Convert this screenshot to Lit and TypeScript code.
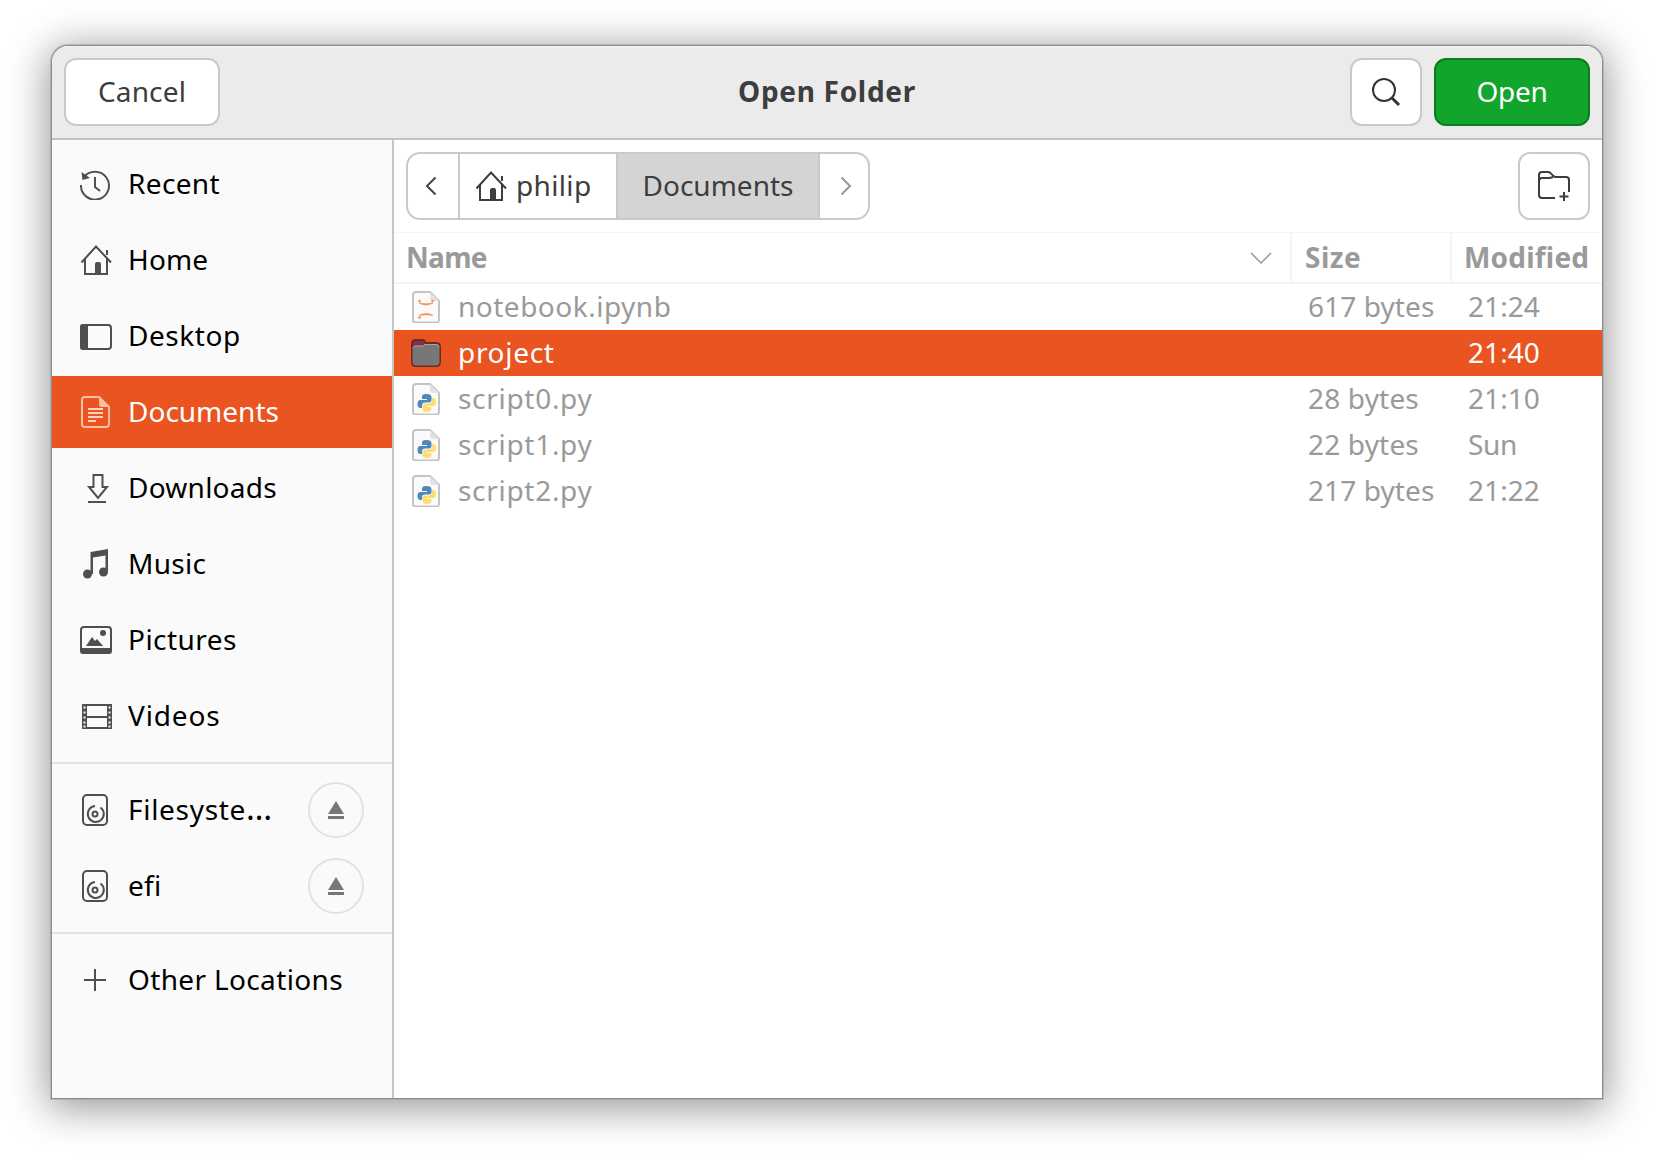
import { LitElement, html, css, svg } from "lit";
import { customElement } from "lit/decorators.js";

const I = {
  recent: svg`<path d="M3.600 9.500A14 14 0 1 1 1 17" fill="none" stroke="currentColor" stroke-width="2"/><path d="M1.500 4l1 8 7.500-2z" fill="currentColor"/><path d="M15 9v10l5 4" fill="none" stroke="currentColor" stroke-width="2"/>`,
  home: svg`<path d="M1.500 18.500L16 2.500l15 16" fill="none" stroke="currentColor" stroke-width="2"/><path d="M5 15v15h22V15" fill="none" stroke="currentColor" stroke-width="2"/><path d="M15 30V20q0-2 2-2h2q2 0 2 2v10zM26 6h2v5h-2z" fill="currentColor"/>`,
  desktop: svg`<rect x="1" y="5" width="30" height="24" rx="3" fill="none" stroke="currentColor" stroke-width="2"/><path d="M3 4h5v26H3a3 3 0 0 1-3-3V7a3 3 0 0 1 3-3z" fill="currentColor"/>`,
  doc: svg`<path d="M5 1h14l10 10v17a3 3 0 0 1-3 3H5a3 3 0 0 1-3-3V4a3 3 0 0 1 3-3z" fill="none" stroke="#f9bfa3" stroke-width="2"/><path d="M19 1v7a3 3 0 0 0 3 3h7z" fill="#f9bfa3"/><path d="M8 13h15M8 17h15M8 21h15M8 25h8" stroke="#fbd2bd" stroke-width="2"/>`,
  dl: svg`<path d="M13.500 3h9v12h4.500L18 26 9 15h4.500z" fill="none" stroke="currentColor" stroke-width="2"/><path d="M8 30h18" stroke="currentColor" stroke-width="2"/>`,
  music: svg`<path d="M10.500 4L28 1v23h-2.500V7.500L13 9.500V26h-2.500z" fill="currentColor"/><circle cx="7.500" cy="26" r="4.500" fill="currentColor"/><circle cx="23.500" cy="24" r="4.500" fill="currentColor"/>`,
  pics: svg`<rect x="1" y="3" width="30" height="25" rx="3" fill="none" stroke="currentColor" stroke-width="2"/><path d="M0 24h32v3a3 3 0 0 1-3 3H3a3 3 0 0 1-3-3zM6 22l6-9 3 4 2-2 6 7z" fill="currentColor"/><circle cx="23" cy="9" r="3" fill="currentColor"/>`,
  vid: svg`<path d="M2 4h5v25H2zM27 4h5v25h-5z" fill="currentColor"/><path d="M7 5h20M7 17h20M7 28h20" stroke="currentColor" stroke-width="2"/><path d="M3.500 6.500h2v2h-2zM3.500 11.500h2v2h-2zM3.500 16.500h2v2h-2zM3.500 21.500h2v2h-2zM3.500 25.500h2v2h-2zM28.500 6.500h2v2h-2zM28.500 11.500h2v2h-2zM28.500 16.500h2v2h-2zM28.500 21.500h2v2h-2zM28.500 25.500h2v2h-2z" fill="#fafafa"/>`,
  disk: svg`<rect x="3" y="1" width="24" height="30" rx="4" fill="none" stroke="currentColor" stroke-width="2"/><path d="M20.500 13.500A8 8 0 1 1 15 12" fill="none" stroke="currentColor" stroke-width="2"/><circle cx="15" cy="20" r="2.500" fill="none" stroke="currentColor" stroke-width="2"/>`,
  plus: svg`<path d="M15 5v22M4 16h22" stroke="currentColor" stroke-width="2"/>`,
};

const ic = (p: unknown) => html`<svg class="ic" viewBox="0 0 32 32" width="32" height="32">${p}</svg>`;

const FILE_SHAPE = svg`<path d="M4 1h14l9 9v19a2.500 2.500 0 0 1-2.500 2.500H3.500A2.500 2.500 0 0 1 1 29V4a3 3 0 0 1 3-3z" fill="#fafafa" stroke="#c4c4c4" stroke-width="2"/><path d="M18 1v6a3 3 0 0 0 3 3h6z" fill="#e2e2e2"/>`;
const py = svg`<path d="M14.500 11c-3.500 0-4.500 1.300-4.500 3v2h5v1H8.500C6.500 17 5.500 18.500 5.500 21s1 4 3 4H10v-2.500c0-1.800 1.200-3 3-3h4c1.500 0 2.500-1 2.500-2.500V14c0-2-2-3-5-3z" fill="#4f88bf"/><path d="M14.500 29c3.500 0 5-1.200 5-3v-2h-5v-1H21c2 0 3-1.500 3-4s-1-4-3-4h-1v2.500c0 1.800-1.200 3-3 3h-4c-1.500 0-2.500 1-2.500 2.500V26c0 2 1.500 3 4.500 3z" fill="#ffdc70"/>`;
const nb = svg`<path d="M7 12q7 4 14 0q-7 1.500-14 0zM7 24.500q7-4 14 0q-7-1.500-14 0z" fill="#f58a4a" stroke="#f58a4a" stroke-width=".6"/><circle cx="7.500" cy="10" r="1.200" fill="#f58a4a"/><circle cx="20.500" cy="10" r="1.200" fill="#f58a4a"/><circle cx="7.500" cy="26.500" r="1.300" fill="#f58a4a"/>`;
const fileIcon = (inner: unknown) => html`<svg class="fi" viewBox="0 0 28 32" width="28" height="32">${FILE_SHAPE}${inner}</svg>`;
const folderIcon = html`<svg class="folder" viewBox="0 0 32 30" width="32" height="30"><path d="M1 6q0-5 5-5h6q3 0 4 3h10q5 0 5 5v15q0 5-5 5H6q-5 0-5-5z" fill="#6e2a1f"/><path d="M3 6q0-3 3-3h6q2.500 0 3.500 3H27q2 0 2.500 2H3z" fill="#83304a"/><path d="M2.500 11q0-3 3-3H13l2-1.500h11q3.500 0 3.500 3.500v14q0 3.500-3.500 3.500H6q-3.500 0-3.500-3.500z" fill="#777"/><path d="M3 10q0-2 3-2H13l2-1.500h11q3 0 3 3" fill="none" stroke="#a8a8a8" stroke-width="1"/></svg>`;

type Side = [string, unknown, boolean, number];
type File = [unknown, string, number, string, number, string, number, boolean];
const ls = (n: number) => `letter-spacing:${n}px`;

@customElement("app-root")
export class AppRoot extends LitElement {
  static styles = css`
    :host {
      display: block;
      width: 1654px;
      height: 1156px;
      background: #fff;
      overflow: hidden;
      font-family: "Noto Sans", sans-serif;
      font-size: 28px;
      color: #000;
    }
    .page { padding: 46px 52px 0; }
    .win {
      width: 1550px;
      height: 1052px;
      border-radius: 16px 16px 0 0;
      background: #fff;
      display: flex;
      flex-direction: column;
      box-shadow: 0 0 0 1px #8c8c8c, 0 0 0 2px rgba(150,150,150,.45), 0 6px 40px 4px rgba(0,0,0,.42);
      overflow: hidden;
    }
    .t { display: block; padding-bottom: 3px; }
    .head {
      height: 92px;
      box-sizing: border-box;
      background: #ebebeb;
      border-top: 1px solid #f6f6f6;
      display: grid;
      grid-template-columns: 1fr auto 1fr;
      align-items: center;
      padding: 11px 12px 0;
      flex: none;
    }
    .hl, .hr { display: flex; align-self: flex-start; }
    .hr { justify-content: flex-end; gap: 12px; }
    .divider { height: 2px; background: #c2c2c2; flex: none; }
    .btn {
      box-sizing: border-box;
      height: 68px;
      border: 2px solid #c9c9c9;
      border-radius: 12px;
      background: #fff;
      display: flex;
      align-items: center;
      justify-content: center;
      color: #3d3d3d;
    }
    .cancel { width: 156px; letter-spacing: .15px; }
    .title {
      font-weight: 700;
      color: #3d3d3d;
      letter-spacing: .7px;
      padding-bottom: 14px;
    }
    .search { width: 72px; padding-right: 1px; }
    .open {
      width: 156px;
      background: #12a52c;
      border-color: #0e7a21;
      color: #fff;
      letter-spacing: -.35px;
    }
    .body { flex: 1; display: flex; min-height: 0; }
    .side {
      width: 340px;
      flex: none;
      background: #fafafa;
      border-right: 2px solid #c6c6c6;
      padding-top: 8px;
    }
    .group { display: flex; flex-direction: column; gap: 4px; }
    .sep { height: 2px; background: #e3e3e3; margin: 10px 0; }
    .item {
      height: 72px;
      display: flex;
      align-items: center;
      padding-left: 28px;
      color: #000;
    }
    .item.sel { background: #e95420; color: #fff; }
    .ic { color: #4f4f4f; flex: none; margin-right: 16px; }
    .ellipsis { font-size: 33px; line-height: 0; letter-spacing: 0; }
    .ej {
      box-sizing: border-box;
      width: 56px;
      height: 56px;
      margin-left: auto;
      margin-right: 28px;
      border: 2px solid #e2e2e2;
      border-radius: 50%;
      display: flex;
      align-items: center;
      justify-content: center;
    }
    .main { flex: 1; min-width: 0; display: flex; flex-direction: column; }
    .bar {
      display: flex;
      justify-content: space-between;
      padding: 12px;
    }
    .path {
      display: flex;
      box-sizing: border-box;
      height: 68px;
      border: 2px solid #c9c9c9;
      border-radius: 14px;
      overflow: hidden;
      color: #3d3d3d;
    }
    .seg { display: flex; align-items: center; }
    .seg.back { padding-right: 4px; width: 46px; border-right: 2px solid #c9c9c9; justify-content: center; }
    .seg.phil { width: 158px; padding-left: 15px; box-sizing: border-box; border-right: 2px solid #c9c9c9; gap: 9px; letter-spacing: .35px; }
    .seg.docs { width: 200px; background: #d4d4d4; justify-content: center; border-right: 2px solid #c9c9c9; }
    .seg.fwd { width: 48px; box-sizing: border-box; padding-left: 3px; justify-content: center; }
    .newf { width: 72px; }
    .cols, .row {
      display: grid;
      grid-template-columns: 898px 160px 150px;
    }
    .cols {
      height: 52px;
      box-sizing: border-box;
      border-top: 1px solid #f4f4f4;
      border-bottom: 2px solid #f4f4f4;
      font-weight: 700;
      color: #9a9a9a;
      flex: none;
    }
    .cols > div { display: flex; align-items: center; box-sizing: border-box; }
    .cols .t { padding-bottom: 1px; }
    .c1 { padding-left: 12px; padding-right: 18px; justify-content: space-between; border-right: 2px solid #f4f4f4; letter-spacing: -.7px; }
    .c2 { padding-left: 13px; border-right: 2px solid #f4f4f4; letter-spacing: .5px; }
    .c3 { padding-left: 12px; white-space: nowrap; letter-spacing: .2px; }
    .row {
      height: 46px;
      align-items: center;
      color: #9a9a9a;
    }
    .row.sel { background: #e95420; color: #fff; }
    .name { display: flex; align-items: center; padding-left: 18px; gap: 18px; }
    .name span { padding-bottom: 2px; }
    .name .folder { margin-left: -2px; margin-right: -2px; }
    .sz, .dt { padding-left: 16px; padding-bottom: 2px; white-space: nowrap; }
    .fi, .folder { flex: none; }
  `;

  render() {
    const top: Side[] = [
      ["Recent", I.recent, false, .35], ["Home", I.home, false, .15], ["Desktop", I.desktop, false, .55],
      ["Documents", I.doc, true, 0], ["Downloads", I.dl, false, .25], ["Music", I.music, false, .3],
      ["Pictures", I.pics, false, .45], ["Videos", I.vid, false, .85],
    ];
    const eject = html`<div class="ej"><svg viewBox="0 0 16 19" width="16" height="19"><path d="M8 0l8 13H0zM0 15h16v3H0z" fill="#777"/></svg></div>`;
    const files: File[] = [
      [fileIcon(nb), "notebook.ipynb", .5, "617 bytes", .1, "21:24", .05, false],
      [folderIcon, "project", .7, "", 0, "21:40", .05, true],
      [fileIcon(py), "script0.py", .7, "28 bytes", .17, "21:10", .05, false],
      [fileIcon(py), "script1.py", .7, "22 bytes", .17, "Sun", -.3, false],
      [fileIcon(py), "script2.py", .7, "217 bytes", .1, "21:22", .05, false],
    ];
    return html`<div class="page"><div class="win">
      <div class="head">
        <div class="hl"><div class="btn cancel"><span class="t">Cancel</span></div></div>
        <div class="title">Open Folder</div>
        <div class="hr">
          <div class="btn search"><svg viewBox="0 0 32 32" width="32" height="32"><circle cx="14" cy="14" r="11" fill="none" stroke="#333" stroke-width="2"/><path d="M22 22l7 7" stroke="#333" stroke-width="3"/></svg></div>
          <div class="btn open"><span class="t">Open</span></div>
        </div>
      </div>
      <div class="divider"></div>
      <div class="body">
        <div class="side">
          <div class="group">${top.map(([t, i, s, l]) => html`<div class="item ${s ? "sel" : ""}">${ic(i)}<span class="t" style=${ls(l)}>${t}</span></div>`)}</div>
          <div class="sep"></div>
          <div class="group">
            <div class="item">${ic(I.disk)}<span class="t" style=${ls(.7)}>Filesyste<span class="ellipsis">…</span></span>${eject}</div>
            <div class="item">${ic(I.disk)}<span class="t" style=${ls(.3)}>efi</span>${eject}</div>
          </div>
          <div class="sep"></div>
          <div class="group"><div class="item">${ic(I.plus)}<span class="t" style=${ls(.35)}>Other Locations</span></div></div>
        </div>
        <div class="main">
          <div class="bar">
            <div class="path">
              <div class="seg back"><svg viewBox="0 0 12 20" width="12" height="20"><path d="M10.500 1.500L2 10l8.500 8.500" fill="none" stroke="#444" stroke-width="2"/></svg></div>
              <div class="seg phil"><svg viewBox="0 0 32 32" width="32" height="32">${I.home}</svg><span class="t">philip</span></div>
              <div class="seg docs"><span class="t">Documents</span></div>
              <div class="seg fwd"><svg viewBox="0 0 12 20" width="12" height="20"><path d="M1.500 1.500L10 10l-8.500 8.500" fill="none" stroke="#999" stroke-width="2"/></svg></div>
            </div>
            <div class="btn newf"><svg viewBox="0 0 34 32" width="34" height="32"><path d="M18 28H5a3 3 0 0 1-3-3V5a3 3 0 0 1 3-3h6q2 0 3.500 2T18 7h11a3 3 0 0 1 3 3v12M2 11q0-3 3-3h6q3 0 5-1" fill="none" stroke="#3d3d3d" stroke-width="2"/><path d="M27 22v9M22.500 26.500h9" stroke="#3d3d3d" stroke-width="2"/></svg></div>
          </div>
          <div class="cols">
            <div class="c1"><span class="t">Name</span><svg viewBox="0 0 22 12" width="22" height="12"><path d="M1 1l10 10L21 1" fill="none" stroke="#999" stroke-width="1.500"/></svg></div>
            <div class="c2"><span class="t">Size</span></div>
            <div class="c3"><span class="t">Modified</span></div>
          </div>
          <div class="list">
            ${files.map(([ico, n, nl, sz, sl, d, dl, s]) => html`<div class="row ${s ? "sel" : ""}">
              <div class="name">${ico}<span style=${ls(nl)}>${n}</span></div>
              <div class="sz" style=${ls(sl)}>${sz}</div>
              <div class="dt" style=${ls(dl)}>${d}</div>
            </div>`)}
          </div>
        </div>
      </div>
    </div></div>`;
  }
}
